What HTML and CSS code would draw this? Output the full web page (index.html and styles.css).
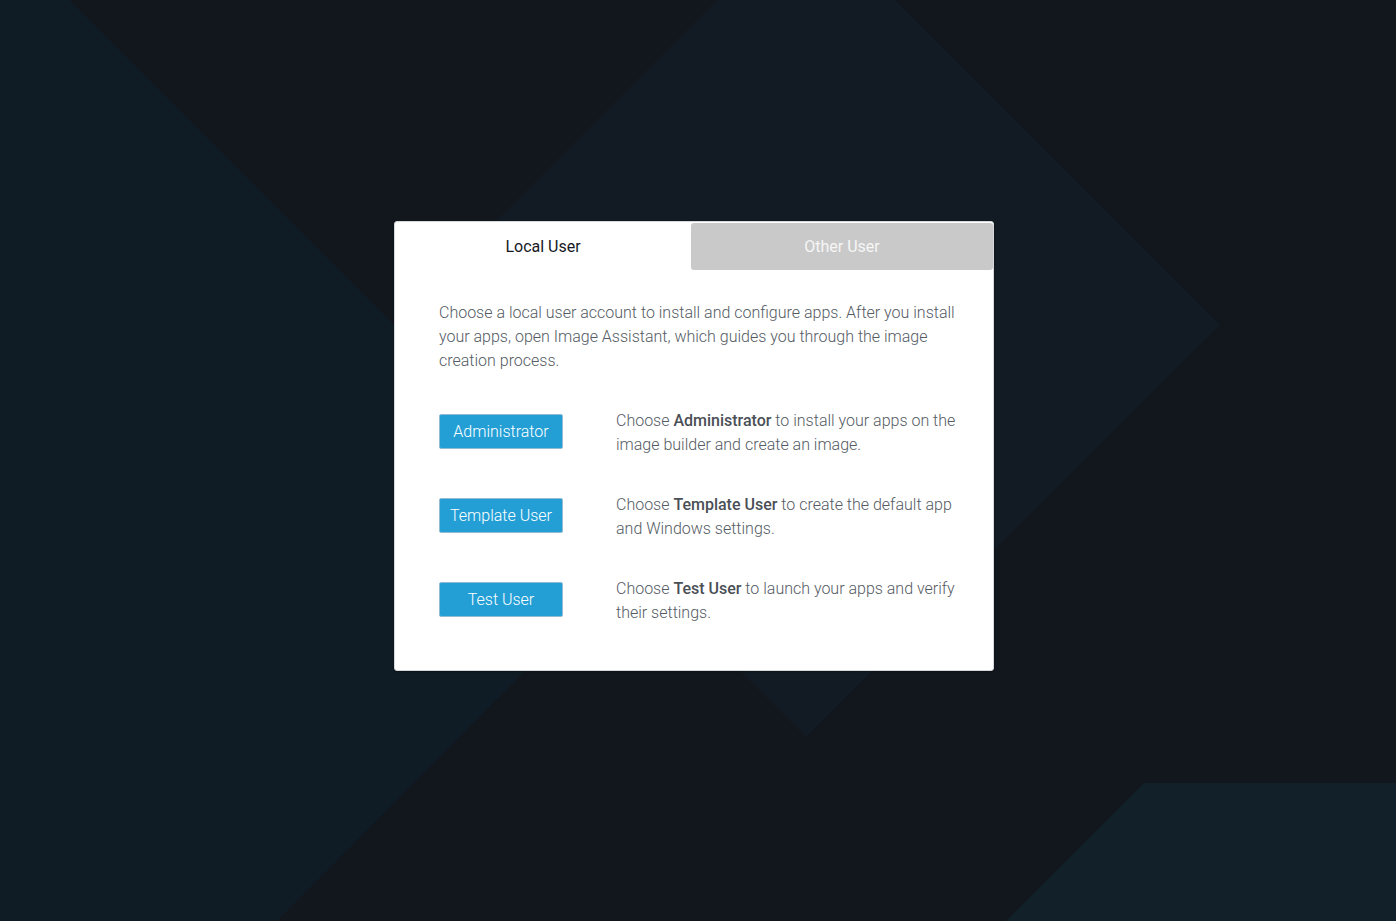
FILE: index.html
```html
<!DOCTYPE html>
<html lang="en">
<head>
  <meta charset="UTF-8">
  <meta name="viewport" content="width=device-width, initial-scale=1.0">
  <title>Image Builder - Choose User</title>
  <link rel="stylesheet" href="styles.css">
</head>
<body>
  <!-- background shapes -->
  <svg class="backdrop" viewBox="0 0 1396 921" preserveAspectRatio="none" aria-hidden="true">
    <polygon class="shape-left" points="0,0 69,0 632,563 277,921 0,921" />
    <polygon class="shape-diamond" points="806,-89 1220,325 806,737 393,324" />
    <polygon class="shape-corner" points="1144,783 1396,783 1396,921 1006,921" />
  </svg>

  <main class="stage">
    <section class="user-card">
      <div class="tabs">
        <div class="tab tab-active">Local User</div>
        <div class="tab tab-other">Other User</div>
      </div>

      <div class="card-body">
        <p class="intro">Choose a local user account to install and configure apps. After you install your apps, open Image Assistant, which guides you through the image creation process.</p>

        <div class="user-list">
          <div class="user-row">
            <button class="user-btn">Administrator</button>
            <p>Choose <strong>Administrator</strong> to install your apps on the image builder and create an image.</p>
          </div>
          <div class="user-row">
            <button class="user-btn">Template User</button>
            <p>Choose <strong>Template User</strong> to create the default app and Windows settings.</p>
          </div>
          <div class="user-row">
            <button class="user-btn">Test User</button>
            <p>Choose <strong>Test User</strong> to launch your apps and verify their settings.</p>
          </div>
        </div>
      </div>
    </section>
  </main>
</body>
</html>
```

FILE: styles.css
```css
/* base */
* {
  box-sizing: border-box;
}
html,
body {
  height: 100%;
}
body {
  margin: 0;
  background-color: #12171e;
  font-family: Roboto, "Open Sans", sans-serif;
  overflow: hidden;
  position: relative;
}

/* background shapes */
.backdrop {
  position: absolute;
  top: 0;
  left: 0;
  width: 100%;
  height: 100%;
  display: block;
}
.shape-left {
  fill: #101c25;
}
.shape-diamond {
  fill: #121b23;
}
.shape-corner {
  fill: #12202a;
}

/* card */
.stage {
  position: relative;
  display: flex;
  justify-content: center;
  padding: 221px 8px 0 0;
}
.user-card {
  width: 600px;
  background-color: #fff;
  border: 1px solid #d5d8da;
  border-radius: 3px;
  box-shadow: 0 1px 2px rgba(0, 0, 0, 0.3);
}
.tabs {
  display: grid;
  grid-template-columns: 296px 1fr;
  height: 48px;
}
.tab {
  display: flex;
  align-items: center;
  justify-content: center;
  font-size: 16px;
  color: #16191f;
}
.tab-other {
  background-color: #c9c9c9;
  color: #f6f6f6;
  border-radius: 3px;
  margin-top: 1px;
}

.card-body {
  padding: 31px 30px 45px 44px;
  color: #545b64;
  font-size: 16px;
  line-height: 24px;
  font-weight: 300;
}
.intro {
  margin: 0 0 36px;
}
.user-list {
  display: flex;
  flex-direction: column;
  gap: 36px;
}
.user-row {
  display: grid;
  grid-template-columns: 124px 1fr;
  column-gap: 53px;
  align-items: start;
}
.user-row p {
  margin: 0;
}
.user-row strong {
  font-weight: 500;
  color: #4a4f56;
}
.user-btn {
  margin-top: 5px;
  height: 35px;
  padding: 0;
  background-color: #239fd6;
  border: 1px solid #93bcd4;
  border-radius: 2px;
  color: #fff;
  font-family: inherit;
  font-size: 16px;
  font-weight: 300;
  cursor: pointer;
}
```
